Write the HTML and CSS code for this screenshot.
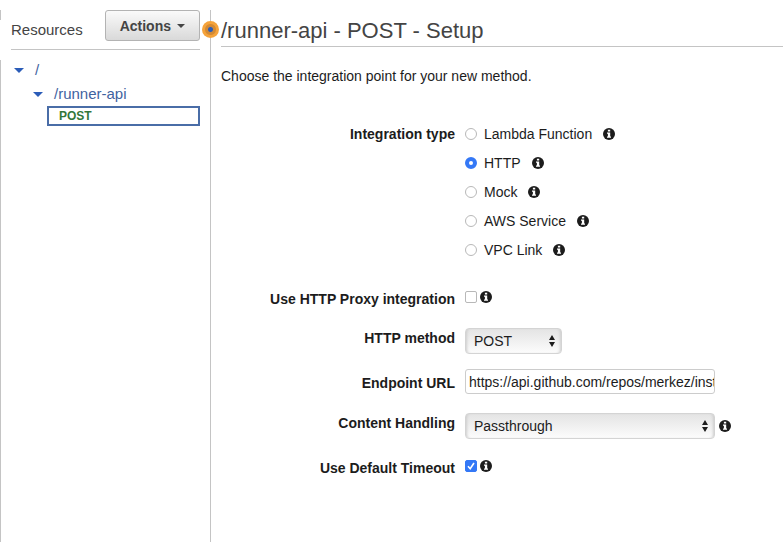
FILE: index.html
```html
<!DOCTYPE html>
<html lang="en">
<head>
<meta charset="utf-8">
<title>/runner-api - POST - Setup</title>
<link rel="stylesheet" href="styles.css">
</head>
<body>
<svg class="defs" aria-hidden="true">
  <symbol id="info" viewBox="0 0 12 12">
    <circle cx="6" cy="6" r="6" fill="#1c1c1c"/>
    <path d="M4.9 1.7h2.3v1.8H4.9zM4 4.5h3.2v4H8v1.3H4V8.500h.9V5.800H4z" fill="#fff"/>
  </symbol>
</svg>
<div class="app">
  <div class="rail"></div>
  <nav class="sidebar" aria-label="Resources">
    <div class="sidebar-head">
      <span class="sidebar-title">Resources</span>
      <button class="actions" type="button">Actions <span class="caret"></span></button>
    </div>
    <ul class="tree">
      <li class="node"><span class="toggle"></span><a href="#root">/</a></li>
      <li class="node nested"><span class="toggle"></span><a href="#runner-api">/runner-api</a></li>
      <li class="method"><a href="#post">POST</a></li>
    </ul>
  </nav>
  <main class="main">
    <span class="handle"></span>
    <h1>/runner-api - POST - Setup</h1>
    <p class="intro">Choose the integration point for your new method.</p>
    <form class="form">
      <div class="row types" role="radiogroup" aria-labelledby="type-label">
        <span class="label" id="type-label">Integration type</span>
        <div class="options">
          <div class="option"><label><input type="radio" name="type">Lambda Function</label><svg class="info"><use href="#info"/></svg></div>
          <div class="option"><label><input type="radio" name="type" checked>HTTP</label><svg class="info"><use href="#info"/></svg></div>
          <div class="option"><label><input type="radio" name="type">Mock</label><svg class="info"><use href="#info"/></svg></div>
          <div class="option"><label><input type="radio" name="type">AWS Service</label><svg class="info"><use href="#info"/></svg></div>
          <div class="option"><label><input type="radio" name="type">VPC Link</label><svg class="info"><use href="#info"/></svg></div>
        </div>
      </div>
      <div class="row check">
        <label class="label" for="proxy">Use HTTP Proxy integration</label>
        <div class="field"><input type="checkbox" id="proxy"><svg class="info"><use href="#info"/></svg></div>
      </div>
      <div class="row">
        <label class="label" for="verb">HTTP method</label>
        <div class="field">
          <span class="select short"><select id="verb"><option>POST</option></select><svg class="arrows" viewBox="0 0 8 14"><path d="M4 1l3 5H1zM4 13l3-5H1z"/></svg></span>
        </div>
      </div>
      <div class="row url">
        <label class="label" for="url">Endpoint URL</label>
        <div class="field"><input class="text" type="text" id="url" value="https://api.github.com/repos/merkez/instance"></div>
      </div>
      <div class="row">
        <label class="label" for="content">Content Handling</label>
        <div class="field">
          <span class="select"><select id="content"><option>Passthrough</option></select><svg class="arrows" viewBox="0 0 8 14"><path d="M4 1l3 5H1zM4 13l3-5H1z"/></svg></span>
          <svg class="info"><use href="#info"/></svg>
        </div>
      </div>
      <div class="row check">
        <label class="label" for="timeout">Use Default Timeout</label>
        <div class="field"><input type="checkbox" id="timeout" checked><svg class="info"><use href="#info"/></svg></div>
      </div>
    </form>
  </main>
</div>
</body>
</html>
```
FILE: styles.css
```css
* { box-sizing: border-box; }

body {
  margin: 0;
  background: #fff;
  color: #1c1c1c;
  font: 14px/20px "Liberation Sans", Arial, sans-serif;
}

.defs { position: absolute; width: 0; height: 0; }

a { color: #3f639f; text-decoration: none; }

.app {
  display: grid;
  grid-template-columns: 1px 209px minmax(0, 1fr);
  min-height: 100vh;
  padding-top: 10px;
}

/* Outer edge, interrupted beside the sidebar heading */
.rail { background: linear-gradient(#c4c4c4 10px, #fff 10px, #fff 50px, #c4c4c4 50px); }

.sidebar { padding: 0 10px; }

.sidebar-head {
  display: flex;
  justify-content: space-between;
  align-items: flex-start;
  height: 40px;
  border-bottom: 1px solid #c4c4c4;
}

.sidebar-title { padding-top: 10px; font-size: 15px; color: #444; }

.actions {
  display: flex;
  align-items: center;
  gap: 6px;
  height: 31px;
  padding: 0 14px;
  border: 1px solid #b3b3b3;
  border-radius: 3px;
  background: linear-gradient(#fafafa, #d9d9d9);
  color: #444;
  font: bold 14px/20px "Liberation Sans", Arial, sans-serif;
}

.caret { border: 4px solid transparent; border-top-color: #444; border-bottom: 0; }

.tree { margin: 0; padding: 8px 0 0; list-style: none; }

.node {
  display: flex;
  align-items: center;
  height: 24px;
  padding-left: 3px;
  font-size: 15px;
}

.nested { padding-left: 22px; }

.toggle {
  margin-right: 11px;
  border: 5px solid transparent;
  border-top-color: #2b5cb8;
  border-bottom: 0;
}

.method {
  margin-left: 36px;
  padding-left: 10px;
  border: 2px solid #4a6da7;
  font-size: 12px;
  font-weight: bold;
  line-height: 16px;
}

.method a { color: #33773a; }

.main {
  position: relative;
  padding-left: 10px;
  border-left: 1px solid #c4c4c4;
}

.handle {
  position: absolute;
  top: 11px;
  left: -9px;
  width: 17px;
  height: 17px;
  border-radius: 50%;
  background: radial-gradient(circle, #2b5cb8 2px, #d08a38 3px, #d58a32 5px, #f5a33b 6px);
}

h1 {
  margin: 0;
  padding: 9px 0 3px;
  border-bottom: 1px solid #c4c4c4;
  color: #444;
  font-size: 22px;
  font-weight: normal;
  line-height: 24px;
}

.intro { margin: 19px 0 34px; }

.form { display: grid; gap: 15px; }

.row {
  display: grid;
  grid-template-columns: 234px minmax(0, 1fr);
  column-gap: 10px;
  align-items: start;
}

.types { padding-bottom: 5px; }
.types .label { padding-top: 4px; }

.label { font-weight: bold; text-align: right; }

.option { display: flex; align-items: flex-start; gap: 11px; height: 29px; padding-top: 4px; }
.option label { display: flex; align-items: center; gap: 7px; }
.option .info { margin-top: 4px; }

.info { flex: none; width: 12px; height: 12px; }

.field { display: flex; align-items: center; gap: 4px; }

.check { padding-top: 4px; min-height: 28px; }
.check .field { gap: 3px; padding-top: 2px; }

.url { min-height: 29px; }
.url .label { padding-top: 4px; }

input[type="radio"],
input[type="checkbox"] {
  appearance: none;
  flex: none;
  width: 12px;
  height: 12px;
  margin: 0;
  border: 1px solid #b8b8b8;
  background: #fff;
}

input[type="radio"] { border-radius: 50%; }

input[type="radio"]:checked { border: 4px solid #3478f6; }

input[type="checkbox"] { border-radius: 2px; }

input[type="checkbox"]:checked {
  border-color: #3478f6;
  background: #3478f6 url("data:image/svg+xml,%3Csvg xmlns='http://www.w3.org/2000/svg' viewBox='0 0 10 10'%3E%3Cpath d='M2 5.300l2.200 2.500L8 2' fill='none' stroke='white' stroke-width='1.600'/%3E%3C/svg%3E");
}

.text {
  width: 250px;
  height: 25px;
  padding: 0 0 0 3px;
  border: 1px solid #ccc;
  border-radius: 3px;
  color: #1c1c1c;
  font: inherit;
}

.select { position: relative; width: 250px; }
.short { width: 97px; }

.select select {
  display: block;
  appearance: none;
  width: 100%;
  height: 26px;
  padding: 0 20px 0 8px;
  border: 1px solid #d4d4d4;
  border-radius: 4px;
  background: linear-gradient(#e4e4e4, #fcfcfc);
  box-shadow: inset 3px 0 3px -2px #ccc, inset -3px 0 3px -2px #ccc;
  color: #1c1c1c;
  font: inherit;
}

.arrows {
  position: absolute;
  top: 6px;
  right: 6px;
  width: 8px;
  height: 14px;
  fill: #1c1c1c;
  pointer-events: none;
}
```
